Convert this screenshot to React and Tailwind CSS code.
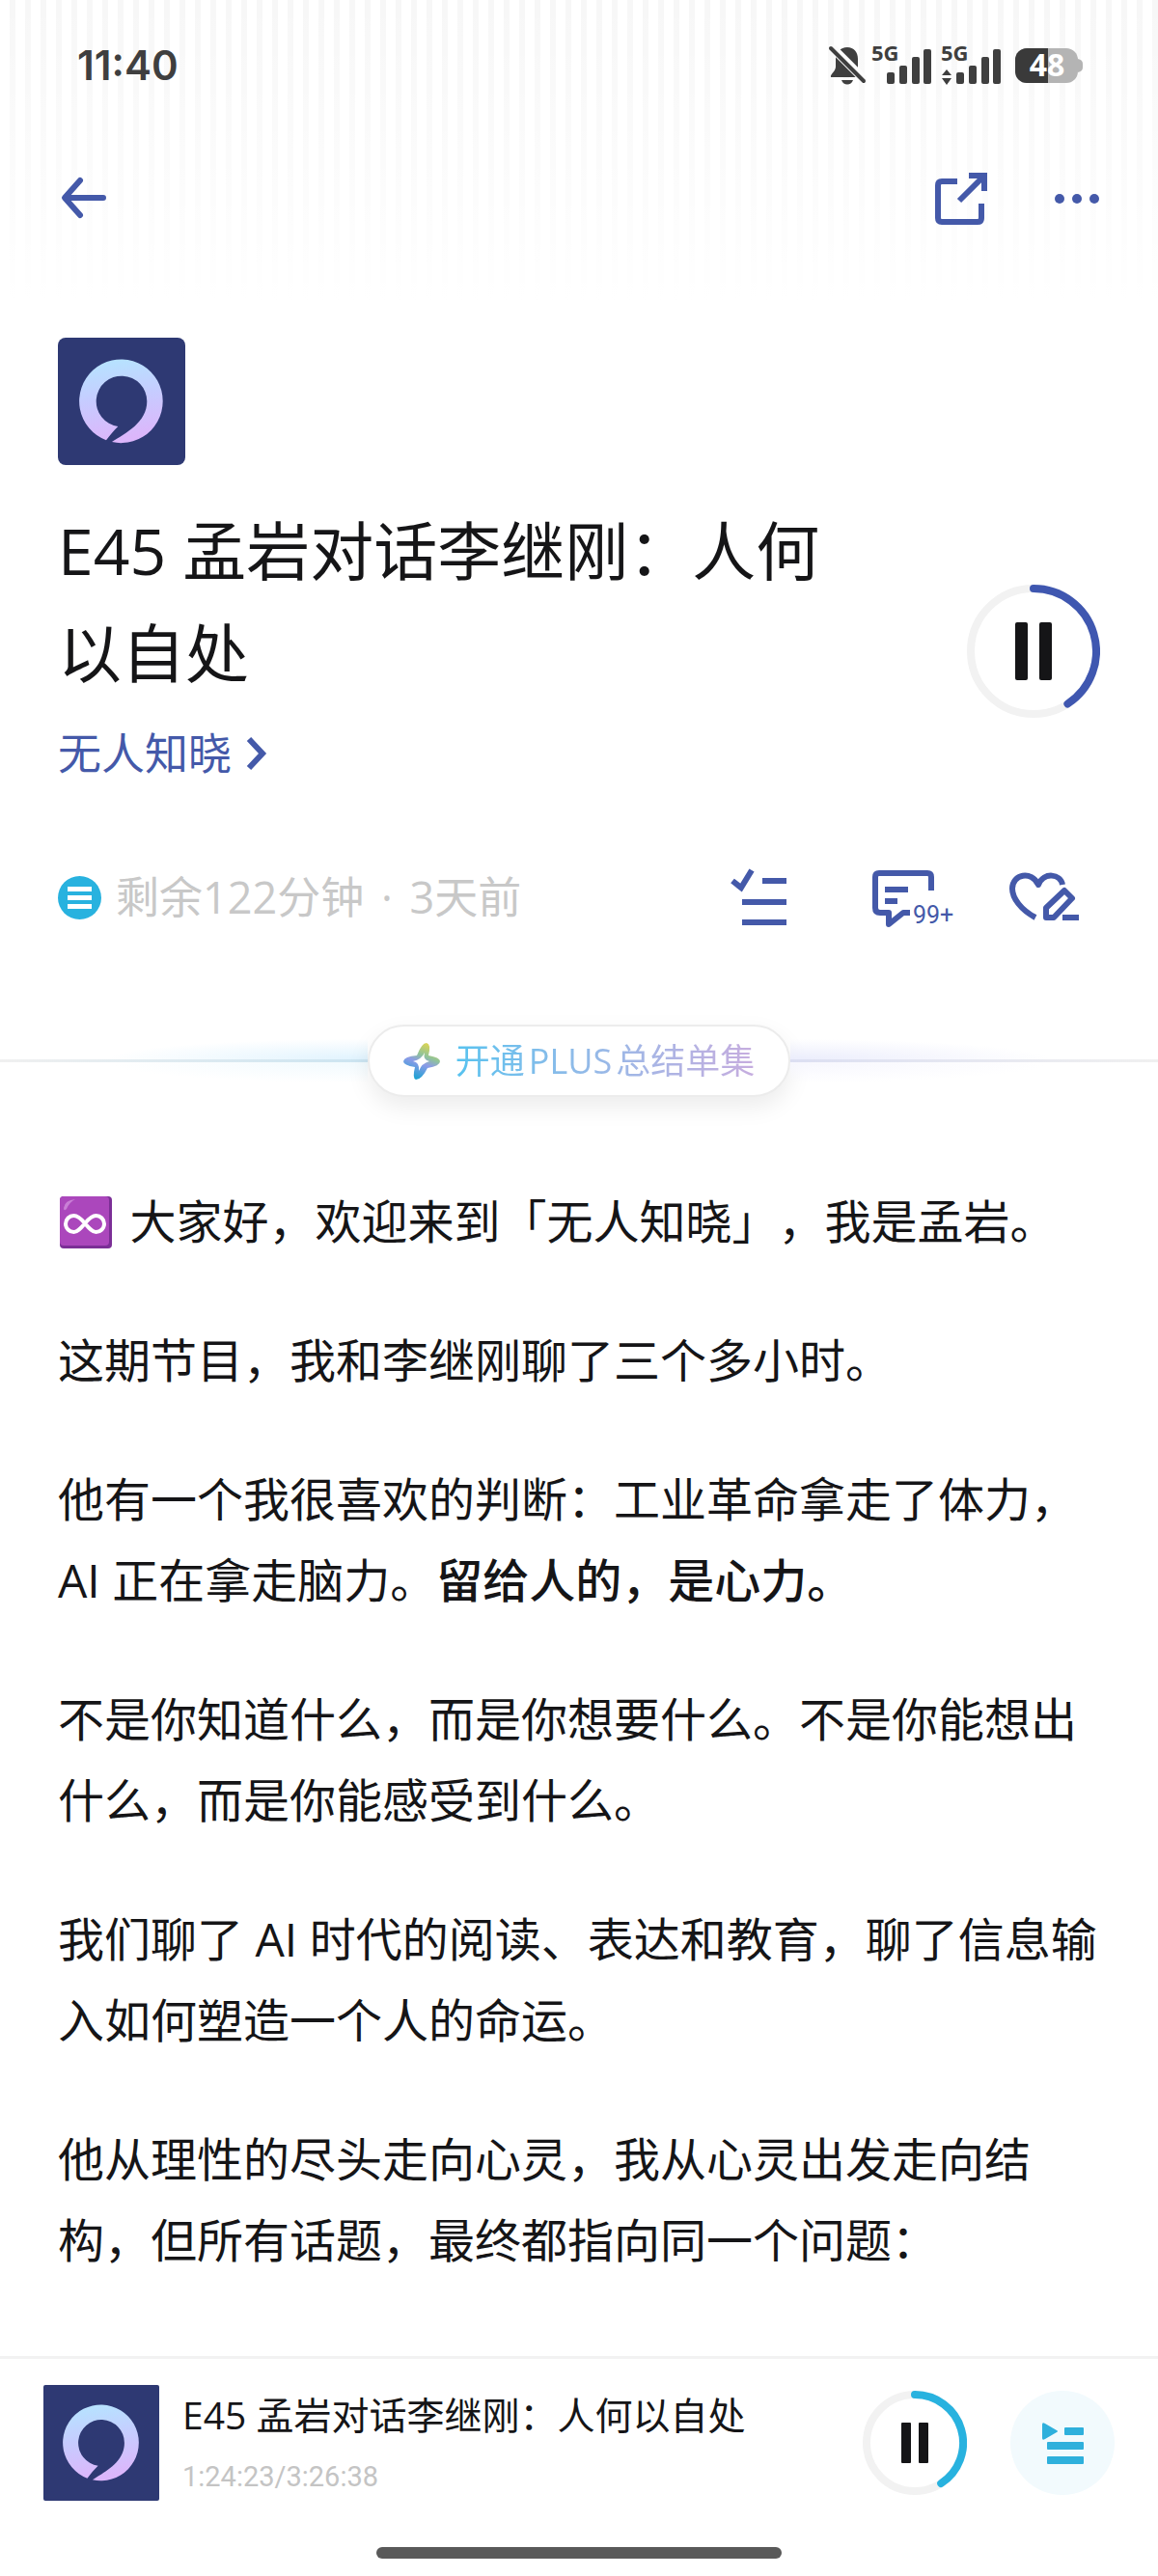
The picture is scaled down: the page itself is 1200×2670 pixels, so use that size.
import React from 'react';

const CoverArt = ({ className }) => (
  <svg viewBox="0 0 132 132" className={className} role="img" aria-label="无人知晓">
    <defs>
      <linearGradient id="ring" x1="0" y1="0" x2="0.15" y2="1">
        <stop offset="0" stopColor="#b4e6ff" />
        <stop offset="0.5" stopColor="#c6ccff" />
        <stop offset="1" stopColor="#dcb6fb" />
      </linearGradient>
    </defs>
    <rect width="132" height="132" fill="#2e3973" />
    <path
      d="M50 106.3A43.3 43.3 0 1 1 56 108.1C70 99 92.3 88 92.3 66A26.3 26.3 0 1 0 62.3 92C58 96 54 101 50 106.3Z"
      fill="url(#ring)"
    />
  </svg>
);

const Signal = ({ active }) => (
  <svg viewBox="0 -7 64 56" className="w-16 h-14" fill="#3f3f3f" aria-hidden="true">
    <text x="0" y="16" fontSize="22" fontWeight="700" fontFamily="Open Sans, sans-serif">5G</text>
    <rect x="16" y="28" width="8" height="12" rx="2" />
    <rect x="29" y="21" width="8" height="19" rx="2" />
    <rect x="42" y="12" width="8" height="28" rx="2" />
    <rect x="54" y="4" width="8" height="36" rx="2" />
    {active && <path d="M1 31l5-6 5 6zM1 34h10l-5 7z" />}
  </svg>
);

const StatusBar = () => (
  <div className="flex items-center justify-between pl-20 pr-[78px] pt-10 text-[#3f3f3f]">
    <span className="font-[Inter] text-[42px] leading-[56px] font-semibold">11:40</span>
    <div className="flex items-center">
      <svg viewBox="0 0 40 42" className="w-10 h-[42px] mr-[5px]" aria-hidden="true">
        <path d="M20 2c7 0 11 5 11 12v10c0 3 4 7 4 9H3c-1-3 5-6 5-11V14C8 7 13 2 20 2z" fill="#3f3f3f" />
        <path d="M14 36h12c-2 6-10 6-12 0z" fill="#3f3f3f" />
        <path d="M1 -1L41 39" stroke="#fcfcfc" strokeWidth="9" />
        <path d="M3 3L37 37" stroke="#3f3f3f" strokeWidth="4" strokeLinecap="round" />
      </svg>
      <Signal />
      <div className="w-2" />
      <Signal active />
      <svg viewBox="0 -10 70 56" className="w-[70px] h-14 ml-[13px]" role="img" aria-label="48">
        <rect width="65" height="36" rx="12" fill="#b4b4b4" />
        <path d="M65 11q5 1 5 5v4q0 4-5 5z" fill="#b4b4b4" />
        <path d="M34 0H12a12 12 0 0 0-12 12v12a12 12 0 0 0 12 12h22z" fill="#3a3a3a" />
        <text x="33" y="29" fontSize="32" fontWeight="700" textAnchor="middle" fill="#fff" fontFamily="Open Sans, sans-serif">48</text>
      </svg>
    </div>
  </div>
);

const NavBar = () => (
  <nav className="flex items-center justify-between px-[60px] pt-[83px] text-[#4459a9]">
    <button aria-label="返回">
      <svg viewBox="0 0 54 54" className="w-[54px] h-[54px]" fill="none" stroke="currentColor" strokeWidth="7" strokeLinecap="round" strokeLinejoin="round">
        <path d="M47 26H8M23 8L7 26l16 18" strokeWidth="6" />
      </svg>
    </button>
    <div className="flex items-center gap-[69px]">
      <button aria-label="分享">
        <svg viewBox="0 0 54 54" className="w-[54px] h-[54px]" fill="none" stroke="currentColor" strokeWidth="6">
          <path d="M23 9H7q-4 0-4 4V47q0 4 4 4H44q4 0 4-4V32" />
          <path d="M35 3H51V19M51 3L25 29" />
        </svg>
      </button>
      <button aria-label="更多">
        <svg viewBox="0 0 48 54" className="w-12 h-[54px]" fill="currentColor">
          <circle cx="6" cy="27" r="5" />
          <circle cx="24" cy="27" r="5" />
          <circle cx="42" cy="27" r="5" />
        </svg>
      </button>
    </div>
  </nav>
);

const BigPause = () => (
  <button aria-label="暂停" className="shrink-0 pb-[67px]">
    <svg viewBox="0 0 138 138" className="w-[138px] h-[138px]" fill="none">
      <circle cx="69" cy="69" r="65" stroke="#f2f2f2" strokeWidth="8" />
      <path d="M69 4A65 65 0 0 1 104.4 123.5" stroke="#3f57b0" strokeWidth="8" strokeLinecap="round" />
      <rect x="50" y="39" width="13" height="60" rx="2" fill="#151517" />
      <rect x="75" y="39" width="13" height="60" rx="2" fill="#151517" />
    </svg>
  </button>
);

const Episode = () => (
  <header className="px-[60px] pt-[117px]">
    <CoverArt className="w-[132px] h-[132px] rounded-lg" />
    <div className="flex items-end mt-[35px]">
      <div className="flex-1 pr-32">
        <h1 className="text-[66px] leading-[106px] text-[#151517]">
          E45 孟岩对话李继刚：人何以自处
        </h1>
        <a href="#" className="flex items-center gap-3.5 mt-[22px] text-[45px] leading-[60px] text-[#4459a9]">
          无人知晓
          <svg viewBox="0 0 24 36" className="w-6 h-9" fill="none" stroke="currentColor" strokeWidth="6">
            <path d="M4 3l14 15L4 33" />
          </svg>
        </a>
      </div>
      <BigPause />
    </div>
  </header>
);

const Meta = () => (
  <div className="flex items-center justify-between px-[60px] mt-[85px]">
    <div className="flex items-center gap-[15px] text-[45px] leading-[68px] text-[#c8c8c8]">
      <svg viewBox="0 0 45 45" className="w-[45px] h-[45px]" aria-hidden="true">
        <circle cx="22.5" cy="22.5" r="22.5" fill="#28b2df" />
        <path d="M10 13.5h25M10 22.5h25M10 31.5h25" stroke="#fff" strokeWidth="5" />
      </svg>
      <p>剩余122分钟<span className="mx-1.5"> · </span>3天前</p>
    </div>
    <div className="flex items-center gap-[54px] pr-[22px] text-[#4459a9]">
      <button aria-label="标记已听">
        <svg viewBox="0 0 60 60" className="w-[60px] h-[60px]" fill="none" stroke="currentColor" strokeWidth="6">
          <path d="M3 13l9 7L23 2M34 13h25M13 35h46M13 56h46" />
        </svg>
      </button>
      <button aria-label="评论" className="ml-[34px]">
        <svg viewBox="0 0 88 68" className="w-[88px] h-[68px]" fill="none" stroke="currentColor" strokeWidth="6">
          <path d="M61 27V13q0-4-4-4H7q-4 0-4 4v32q0 5 5 5h9v12l15-12h7" strokeLinejoin="round" />
          <path d="M13 26h24M13 38h13" />
          <text x="42" y="61" fontSize="25" fill="currentColor" stroke="none" fontFamily="Roboto, sans-serif">99+</text>
        </svg>
      </button>
      <button aria-label="喜欢">
        <svg viewBox="0 0 72 60" className="w-[72px] h-[60px]" fill="none" stroke="currentColor" strokeWidth="6">
          <path d="M27 51C12 43 3 31 3 21C3 6 23 2 30 17C36 3 53 6 55 17" strokeLinejoin="round" />
          <path d="M38 51V41L57 23l8 8-19 20z" strokeLinejoin="round" />
          <path d="M55 51h17" />
        </svg>
      </button>
    </div>
  </div>
);

const PlusDivider = () => (
  <div className="flex items-center mt-[98px]">
    <div className="flex-1">
      <div className="h-[30px] bg-radial-[at_100%_100%] from-[#e0f3fe] to-transparent to-50%" />
      <div className="h-[3px] bg-linear-to-r from-[#f0f0f0] to-[#cbe4f1]" />
      <div className="h-[30px] bg-radial-[at_100%_0%] from-[#f1fafe] to-transparent to-50%" />
    </div>
    <button className="flex items-center h-[75px] px-[35px] gap-4 rounded-full border-2 border-[#ececec] bg-white shadow-[0_10px_24px_rgba(0,0,0,0.08)]">
      <svg viewBox="0 0 38 38" className="w-[38px] h-[38px]" fill="none" aria-hidden="true">
        <defs>
          <linearGradient id="spark" x1="0.7" y1="0" x2="0.3" y2="1">
            <stop offset="0" stopColor="#e3d64c" />
            <stop offset="0.35" stopColor="#8fc39a" />
            <stop offset="0.55" stopColor="#8d9be8" />
            <stop offset="1" stopColor="#12a3d0" />
          </linearGradient>
        </defs>
        <path
          fillRule="evenodd"
          d="M24 0Q29 1 26 13Q38 15 38 19Q38 24 25 26Q19 38 13 38Q9 37 12 25Q0 23 0 19Q1 14 14 13Q19 0 24 0ZM22 10Q19 17 10 19Q17 20 16 29Q19 21 27 19Q20 18 22 10Z"
          fill="url(#spark)"
        />
      </svg>
      <span className="text-[36px] leading-[54px] bg-linear-to-r from-[#56c2ef] to-[#c6addf] bg-clip-text text-transparent">
        开通<span className="px-1">PLUS</span>总结单集
      </span>
    </button>
    <div className="flex-1">
      <div className="h-[30px] bg-radial-[at_0%_100%] from-[#ebedfc] to-transparent to-50%" />
      <div className="h-[3px] bg-linear-to-l from-[#f0f0f0] to-[#dcdff2]" />
      <div className="h-[30px] bg-radial-[at_0%_0%] from-[#f7f7fe] to-transparent to-50%" />
    </div>
  </div>
);

const InfinityEmoji = () => (
  <svg viewBox="0 0 56 54" className="inline-block w-14 h-[54px] mr-[6px] align-[-10px]" role="img" aria-label="♾️">
    <rect x="2" width="54" height="54" rx="4" fill="#7b2f96" />
    <rect x="2" width="51" height="51" rx="4" fill="#ab47bc" />
    <path d="M6 12q1-8 12-9-6 3-9 10-3 3-3-1z" fill="#c97fd6" />
    <path
      d="M28 28C23 22 20 20 16.500 20a8.500 8.500 0 0 0 0 17C20 37 23 34 28 28S36 20 39.500 20a8.500 8.500 0 0 1 0 17C36 37 33 34 28 28z"
      fill="none"
      stroke="#fff"
      strokeWidth="4"
    />
  </svg>
);

const ShowNotes = () => (
  <main className="flex-1 px-[60px] pt-[87px] pb-16 space-y-[60px] text-[48px] leading-[84px] text-[#151517]">
    <p><InfinityEmoji /> 大家好，欢迎来到「无人知晓」，我是孟岩。</p>
    <p>这期节目，我和李继刚聊了三个多小时。</p>
    <p>
      他有一个我很喜欢的判断：工业革命拿走了体力，AI 正在拿走脑力。<strong className="font-medium">留给人的，是心力。</strong>
    </p>
    <p>不是你知道什么，而是你想要什么。不是你能想出什么，而是你能感受到什么。</p>
    <p>我们聊了 AI 时代的阅读、表达和教育，聊了信息输入如何塑造一个人的命运。</p>
    <p>他从理性的尽头走向心灵，我从心灵出发走向结构，但所有话题，最终都指向同一个问题：</p>
  </main>
);

const MiniPlayer = () => (
  <footer className="border-t-3 border-[#f2f2f2] bg-white pb-[18px]">
    <div className="flex items-center px-[45px] pt-[27px]">
      <CoverArt className="w-[120px] h-[120px] rounded-xs" />
      <div className="flex-1 pl-6">
        <p className="text-[39px] leading-[60px] text-[#151517]">E45 孟岩对话李继刚：人何以自处</p>
        <p className="mt-2.5 font-[Roboto] text-[29px] leading-[48px] text-[#c4c4c4]">1:24:23/3:26:38</p>
      </div>
      <button aria-label="暂停">
        <svg viewBox="0 0 108 108" className="w-[108px] h-[108px]" fill="none">
          <circle cx="54" cy="54" r="50" stroke="#f2f2f2" strokeWidth="8" />
          <path d="M54 4A50 50 0 0 1 81.200 96" stroke="#28b2df" strokeWidth="8" strokeLinecap="round" />
          <rect x="40" y="33" width="10" height="42" rx="1" fill="#151517" />
          <rect x="58" y="33" width="10" height="42" rx="1" fill="#151517" />
        </svg>
      </button>
      <button aria-label="播放列表" className="ml-[45px] rounded-full bg-[#f2fafd]">
        <svg viewBox="0 0 108 108" className="w-[108px] h-[108px]" fill="#2fb0dc">
          <path d="M33 35q0-3 3-1l12 7q2 1 0 2l-12 7q-3 2-3-1z" />
          <rect x="56" y="38" width="20" height="8" rx="1" />
          <rect x="38" y="53" width="38" height="8" rx="1" />
          <rect x="38" y="68" width="38" height="8" rx="1" />
        </svg>
      </button>
    </div>
    <div className="w-[35%] h-3 mt-12 mx-auto rounded-full bg-[#595959]" />
  </footer>
);

const App = () => {
  return (
    <div className="min-h-screen flex flex-col bg-white font-['Open_Sans','Noto_Sans_CJK_SC',sans-serif] [text-spacing-trim:space-all]">
      <div className="bg-[linear-gradient(to_bottom,transparent,white_312px),repeating-linear-gradient(to_right,white_0_10px,#f7f7f7_10px_16px)]">
        <StatusBar />
        <NavBar />
        <Episode />
      </div>
      <Meta />
      <PlusDivider />
      <ShowNotes />
      <MiniPlayer />
    </div>
  );
};

export default App;
